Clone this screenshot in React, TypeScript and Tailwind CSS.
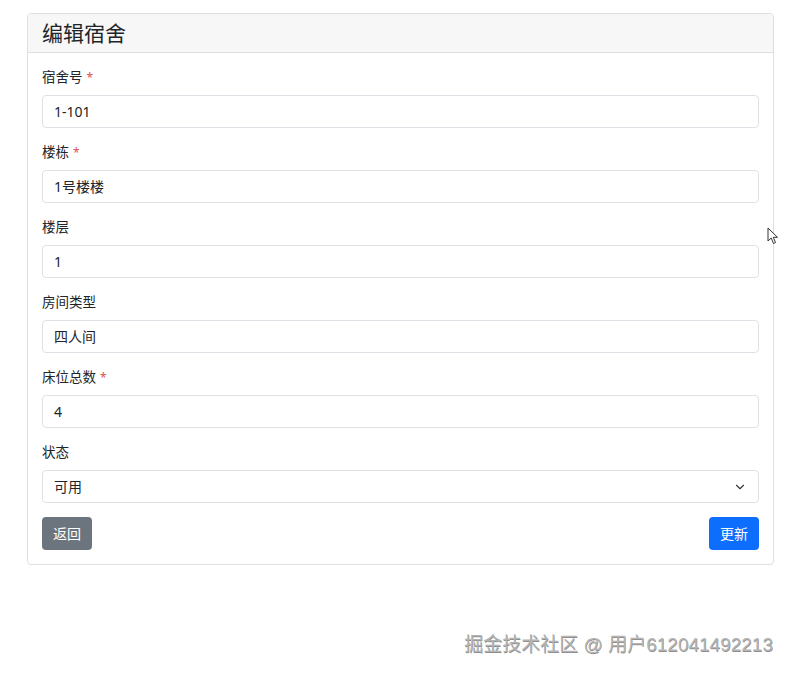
import { ChevronDown } from 'lucide-react';

const fields = [
  { label: '宿舍号', value: '1-101', required: true },
  { label: '楼栋', value: '1号楼楼', required: true },
  { label: '楼层', value: '1', required: false },
  { label: '房间类型', value: '四人间', required: false },
  { label: '床位总数', value: '4', required: true },
];

export default function App() {
  return (
    <div
      className="relative min-h-[675px] bg-white text-[#212529]"
      style={{ fontFamily: '"Noto Sans", "Noto Sans CJK SC", sans-serif' }}
    >
      <div className="pt-[13px] pl-[27px] pr-[19px]">
        <div className="rounded-[4px] border border-[#dfdfdf] bg-white">
          {/* Header */}
          <div className="h-[39px] flex items-center px-[14px] bg-[#f7f7f7] border-b border-[#dfdfdf] rounded-t-[4px]">
            <h1 className="text-[21px] leading-none text-[#212529]">编辑宿舍</h1>
          </div>

          {/* Body */}
          <div className="px-[14px] pt-[14px] pb-[14px]">
            {fields.map((f) => (
              <div key={f.label} className="mb-[14px]">
                <label className="block text-[13.5px] leading-[21px] mb-[7px]">
                  {f.label}
                  {f.required && <span className="text-[#d9534f] text-[12px] ml-[4px]">*</span>}
                </label>
                <div className="h-[33px] flex items-center px-[11px] border border-[#dee2e6] rounded-[4px] text-[14px]">
                  {f.value}
                </div>
              </div>
            ))}

            <div className="mb-[14px]">
              <label className="block text-[13.5px] leading-[21px] mb-[7px]">状态</label>
              <div className="h-[33px] flex items-center justify-between pl-[11px] pr-[11px] border border-[#dee2e6] rounded-[4px] text-[14px]">
                <span>可用</span>
                <ChevronDown className="w-[14px] h-[14px] text-[#343a40]" strokeWidth={2} />
              </div>
            </div>

            <div className="flex items-center justify-between">
              <button className="h-[33px] px-[11px] rounded-[4px] bg-[#6c757d] text-white text-[14px]">
                返回
              </button>
              <button className="h-[33px] px-[11px] rounded-[4px] bg-[#0d6efd] text-white text-[14px]">
                更新
              </button>
            </div>
          </div>
        </div>
      </div>

      {/* mouse cursor */}
      <svg className="absolute left-[767px] top-[227px]" width="12" height="18" viewBox="0 0 12 18">
        <path d="M1 1 L1 14 L4.2 11 L6.5 16.5 L8.5 15.6 L6.3 10.3 L10.5 10.3 Z" fill="white" stroke="#333" strokeWidth="1" strokeLinejoin="round" />
      </svg>

      {/* watermark */}
      <div
        className="absolute right-[20px] top-[632px] text-[19px] leading-[26px] text-[#b4b4b4]"
        style={{ textShadow: '0.5px 0.5px 0 rgba(0,0,0,0.45)', fontFamily: '"Liberation Sans", "Noto Sans CJK SC", sans-serif' }}
      >
        掘金技术社区 @ 用户612041492213
      </div>
    </div>
  );
}
